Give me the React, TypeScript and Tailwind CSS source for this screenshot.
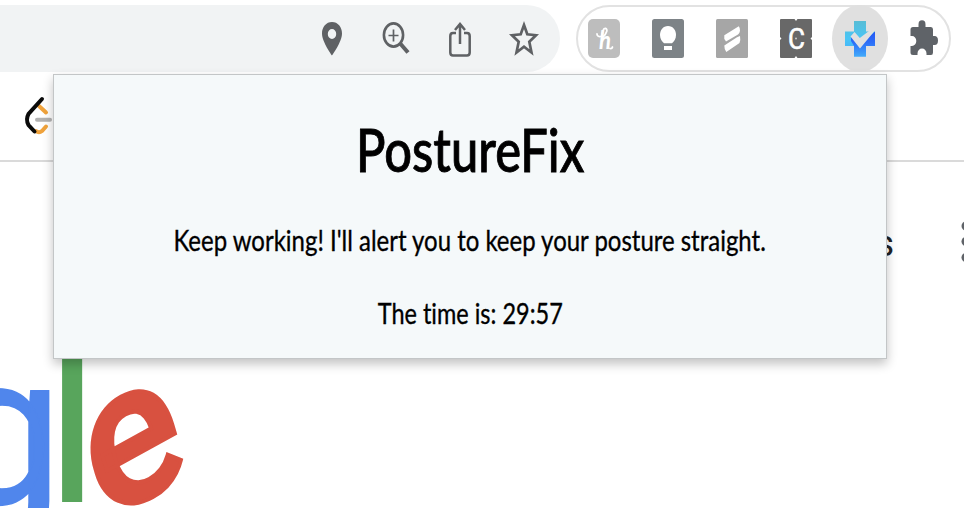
import type { ReactNode } from "react";

function Slot({ children }: { children: ReactNode }) {
  return <span className="flex h-full w-16 shrink-0 items-center justify-center">{children}</span>;
}

function AddressBar() {
  return (
    <div className="flex h-[67px] w-[560px] justify-end rounded-r-[34px] bg-[#f1f3f4] pr-1 text-[#5f6164]">
      <Slot>
        <svg className="h-[67px] w-16" viewBox="0 0 64 67" fill="currentColor">
          <path fillRule="evenodd" d="M32 17c-5.800 0-10 4.900-10 11.500C22 37 32 50.500 32 50.500S42 37 42 28.500C42 21.900 37.800 17 32 17Zm0 7a4.200 5 0 1 1 0 10 4.200 5 0 0 1 0-10Z" />
        </svg>
      </Slot>
      <Slot>
        <svg className="h-[67px] w-16" viewBox="0 0 64 67" fill="none" stroke="currentColor" strokeWidth="2.600">
          <ellipse cx="29.500" cy="30" rx="9.600" ry="11.600" />
          <path d="M29.500 24.500v12M24.500 30.500h10" strokeWidth="1.700" />
          <path d="M36.200 38.500 44 47.500" strokeWidth="4" />
        </svg>
      </Slot>
      <Slot>
        <svg className="h-[67px] w-16" viewBox="0 0 64 67" fill="none" stroke="currentColor" strokeWidth="2.500">
          <path d="M28 28h-3q-2.700 0-2.700 3v16.500q0 3 2.700 3h14q2.700 0 2.700-3V31q0-3-2.700-3h-3" />
          <path d="M32 39V19.500M27 25l5-6 5 6" />
        </svg>
      </Slot>
      <Slot>
        <svg className="h-[67px] w-16" viewBox="0 0 64 67" fill="none" stroke="currentColor" strokeWidth="2.700">
          <path d="m32 20 3.300 9.300 8.700.9-6.700 6.500 2.200 10.800-7.500-5.800-7.500 5.800 2.200-10.800L20 30.200l8.700-.9Z" />
        </svg>
      </Slot>
    </div>
  );
}

function Extensions() {
  return (
    <div className="ml-4 flex h-[67px] w-[375px] items-center rounded-[34px] border-2 border-[#e2e2e2] bg-white">
      <div className="-ml-1.5 flex h-[67px] shrink-0 items-center">
        <Slot>
          <svg className="h-[39px] w-8" viewBox="0 0 32 39">
            <rect width="32" height="39" rx="5" fill="#bdbdbd" />
            <text x="11" y="30" fontSize="25" fontWeight="700" fontStyle="italic" fill="#fff" fontFamily="Lato, sans-serif" textLength="12" lengthAdjust="spacingAndGlyphs">h</text>
            <path d="M15 18c4-4 5-8 2.500-8.500S14 14 14 17c-3 1.500-5 0-5-2M22 29.500q2 .5 2.500-1.500" fill="none" stroke="#fff" strokeWidth="1.800" strokeLinecap="round" />
          </svg>
        </Slot>
        <Slot>
          <svg className="h-[39px] w-8" viewBox="0 0 32 39">
            <rect width="32" height="39" rx="2.500" fill="#7d8387" />
            <path d="M16 7c-5 0-8 4-8 9 0 4 2 6.500 4 8.200h8c2-1.700 4-4.200 4-8.200 0-5-3-9-8-9Z" fill="#fff" />
            <path d="M12 27h8v4h-8z" fill="#fff" />
          </svg>
        </Slot>
        <Slot>
          <svg className="h-[39px] w-8" viewBox="0 0 32 39" fill="#fff">
            <rect width="32" height="39" rx="1.500" fill="#a6a6a6" />
            <path d="m8.300 16.200 14.500-9q1.500 2 1.200 4.500T22 15.500L10 22.400q-1-2-1.700-2.500ZM24 17q.8 4-.5 7L10.300 33Q8.300 31 8.300 26.500L21 18.300Z" />
          </svg>
        </Slot>
        <Slot>
          <svg className="h-[39px] w-8" viewBox="0 0 32 39">
            <rect width="32" height="39" rx="1" fill="#686868" />
            <path d="M14.500 0h3L16 2ZM14.500 39h3L16 37ZM0 18v3l1.500-1.500ZM32 18v3l-1.500-1.500Z" fill="#fff" />
            <text x="8" y="29.500" fontSize="29" fill="#fff" stroke="#fff" strokeWidth=".6" fontFamily="Roboto, sans-serif" textLength="17" lengthAdjust="spacingAndGlyphs">C</text>
            <circle cx="16" cy="19.500" r="1" fill="#ccc" />
          </svg>
        </Slot>
        <Slot>
          <span className="flex h-[67px] w-14 items-center justify-center rounded-[50%] bg-[#e0e0e0]">
            <svg className="h-[67px] w-14" viewBox="0 0 56 67">
              <defs>
                <linearGradient id="cross" x1="0" y1="0" x2="0" y2="1">
                  <stop stopColor="#58bdd5" />
                  <stop offset=".5" stopColor="#49c5f6" />
                  <stop offset="1" stopColor="#43a9fb" />
                </linearGradient>
                <linearGradient id="shade" x1="0" y1="0" x2="0" y2="1">
                  <stop stopColor="#2456f3" />
                  <stop offset=".45" stopColor="#2d6ff8" />
                  <stop offset="1" stopColor="#42aafa" />
                </linearGradient>
              </defs>
              <path d="M22 16h12v10.500h9V41h-9v10.500H22V41h-9V26.500h9Z" fill="url(#cross)" />
              <path d="M19 31 27.500 40 43 26.500V41h-9v10.500H22V41l-3-5Z" fill="url(#shade)" />
              <path d="m18.500 31.500 4-4.500 5.300 6L37 26h5.500L28 43.500Z" fill="#e0e0e0" />
            </svg>
          </span>
        </Slot>
        <Slot>
          <svg className="h-[67px] w-16" viewBox="0 0 64 67" fill="#5f6368">
            <path d="M26.500 22v-2.500a3.500 4.200 0 0 1 7 0V22H39q2 0 2 2.500V31h1.500a3.500 4.500 0 0 1 0 9H41v7.500q0 2.500-2 2.500h-4.500v-1.500a4.500 5 0 0 0-9 0V50H21q-2.500 0-2.500-2.500V41h1.500a4.300 5 0 0 0 0-10h-1.500v-6.500q0-2.500 2.500-2.500Z" />
          </svg>
        </Slot>
      </div>
    </div>
  );
}

function BookmarksBar() {
  return (
    <div className="flex h-[90px] items-start border-b-2 border-[#dadada]">
      <svg className="h-[88px] w-[54px]" viewBox="0 72 54 88" fill="none" strokeLinecap="round" strokeWidth="4">
        <path d="m39 106 7 6.500M36 131q3 2.500 6 0l4-4.500" stroke="#f0a33c" />
        <path d="M37 119.700h13" stroke="#b3b3b3" />
        <path d="M42 99 28.500 114q-3 5.500 0 11l6 6.500" stroke="#0a0a0a" />
      </svg>
    </div>
  );
}

function SearchPage() {
  return (
    <div className="flex h-[346px] justify-between">
      <svg className="h-[346px] w-[220px]" viewBox="0 162 220 346" fontFamily="Roboto, sans-serif" fontWeight="500">
        <text transform="translate(-58 503) scale(1.010 1)" fontSize="214" fontWeight="400" fill="#5086ec" stroke="#5086ec" strokeWidth="1.500">g</text>
        <text transform="translate(50.500 502) scale(.8 1)" fontSize="212" fill="#58a55c">l</text>
        <text transform="translate(133 446.500) scale(.82 1.120) rotate(-22) scale(1.140 .93)" x="0" y="53" textAnchor="middle" fontSize="192" fill="#d85140" stroke="#d85140" strokeWidth="4">e</text>
      </svg>
      <div className="flex pt-[59px]">
        <span className="mr-[66px] mt-1 block h-10 font-[Roboto,sans-serif] text-[36px] leading-[38px] text-[#202124]">s</span>
        <svg className="h-12 w-1" viewBox="0 0 4 48" fill="#5f6368">
          <ellipse cx="6" cy="5" rx="4.500" ry="4.700" />
          <ellipse cx="6" cy="20.500" rx="4.500" ry="4.700" />
          <ellipse cx="6" cy="36.500" rx="4.500" ry="4.700" />
        </svg>
      </div>
    </div>
  );
}

function Popup() {
  return (
    <section className="absolute left-[53px] top-[74px] flex h-[285px] w-[834px] flex-col items-center whitespace-nowrap border border-[#c3c6c7] bg-[#f5f9fa] font-[Lato,sans-serif] text-black shadow-[0_5px_10px_rgba(0,0,0,0.24)] [font-variant-ligatures:none]">
      <h1 className="mt-[38px] h-[72px] scale-x-[.82] text-[59.5px] font-medium leading-[72px] [-webkit-text-stroke:0.9px_black]">PostureFix</h1>
      <p className="mt-[37px] h-9 scale-x-[.826] text-[29px] leading-9 [-webkit-text-stroke:0.35px_black]">Keep working! I'll alert you to keep your posture straight.</p>
      <p className="mt-[37px] h-9 scale-x-[.81] text-[29px] leading-9 [-webkit-text-stroke:0.35px_black]">The time is: 29:57</p>
    </section>
  );
}

export default function App() {
  return (
    <main className="relative h-[508px] w-[964px] overflow-hidden bg-white">
      <header className="flex h-[72px] pt-[5px]">
        <AddressBar />
        <Extensions />
      </header>
      <BookmarksBar />
      <SearchPage />
      <Popup />
    </main>
  );
}
